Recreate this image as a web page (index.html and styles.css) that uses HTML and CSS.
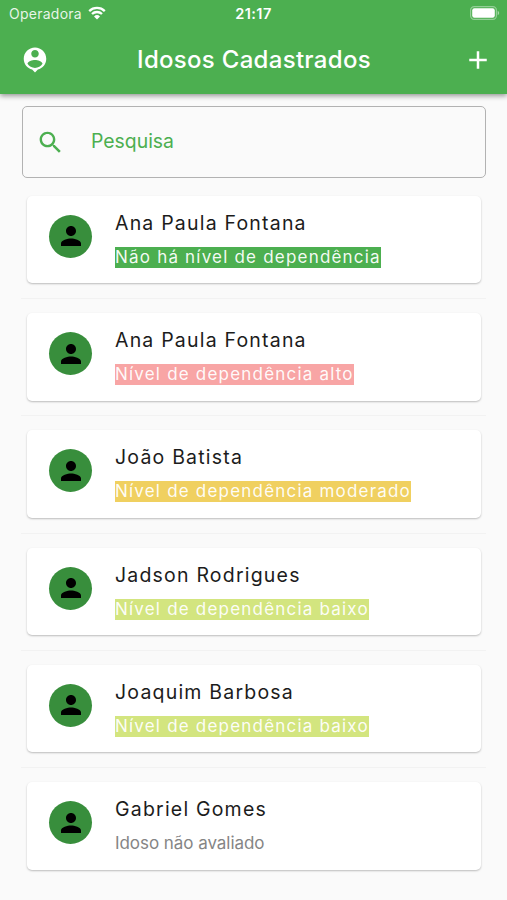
FILE: index.html
```html
<!DOCTYPE html>
<html lang="pt-BR">
<head>
    <meta charset="UTF-8">
    <meta name="viewport" content="width=device-width, initial-scale=1.0">
    <title>Idosos Cadastrados</title>
    <link rel="stylesheet" href="styles.css">
</head>
<body>
    <svg class="sprite" width="0" height="0">
        <symbol id="person" viewBox="0 0 24 24">
            <path d="M12 12c2.21 0 4-1.79 4-4s-1.79-4-4-4-4 1.79-4 4 1.79 4 4 4zm0 2c-2.67 0-8 1.34-8 4v2h16v-2c0-2.66-5.33-4-8-4z"/>
        </symbol>
    </svg>

    <header class="header">
        <div class="status-bar">
            <div class="carrier">
                <span>Operadora</span>
                <svg class="wifi" viewBox="0 0 18 14">
                    <path d="M1.2 5.1a11.2 11.2 0 0 1 15.6 0M4 8a7.2 7.2 0 0 1 10 0" fill="none" stroke="#fff" stroke-width="2.3"/>
                    <path d="M9 13.6l-3-3.1a4.3 4.3 0 0 1 6 0z" fill="#fff"/>
                </svg>
            </div>
            <div class="clock">21:17</div>
            <svg class="battery" viewBox="0 0 30 14">
                <rect x="0.6" y="0.6" width="25.8" height="12.8" rx="3.6" fill="none" stroke="#fff" stroke-opacity=".4" stroke-width="1.2"/>
                <rect x="2.2" y="2.2" width="22.6" height="9.6" rx="2.2" fill="#fff"/>
                <path d="M27.7 4.8c2 .8 2 3.6 0 4.4z" fill="#fff" fill-opacity=".5"/>
            </svg>
        </div>
        <div class="toolbar">
            <svg class="icon-profile" viewBox="0 0 24 24">
                <path d="M12 2c-4.97 0-9 4.03-9 9 0 4.17 2.84 7.67 6.69 8.69L12 22l2.31-2.31C18.16 18.67 21 15.17 21 11c0-4.97-4.03-9-9-9zm0 2c1.66 0 3 1.34 3 3s-1.34 3-3 3-3-1.34-3-3 1.34-3 3-3zm0 14.3c-2.5 0-4.71-1.28-6-3.22.03-1.99 4-3.08 6-3.08 1.99 0 5.97 1.09 6 3.08-1.29 1.94-3.5 3.22-6 3.22z"/>
            </svg>
            <h1>Idosos Cadastrados</h1>
            <svg class="icon-add" viewBox="0 0 24 24">
                <path d="M19 13h-6v6h-2v-6H5v-2h6V5h2v6h6v2z"/>
            </svg>
        </div>
    </header>

    <main class="content">
        <div class="search">
            <svg class="icon-search" viewBox="0 0 24 24">
                <path d="M15.5 14h-.79l-.28-.27C15.41 12.59 16 11.11 16 9.5 16 5.91 13.09 3 9.5 3S3 5.91 3 9.5 5.91 16 9.5 16c1.61 0 3.09-.59 4.23-1.57l.27.28v.79l5 4.99L20.49 19l-4.99-5zm-6 0C7.01 14 5 11.99 5 9.5S7.01 5 9.5 5 14 7.01 14 9.5 11.99 14 9.5 14z"/>
            </svg>
            <span>Pesquisa</span>
        </div>

        <ul class="list">
            <li>
                <div class="card">
                    <div class="avatar"><svg><use href="#person"/></svg></div>
                    <div class="info">
                        <h2>Ana Paula Fontana</h2>
                        <span class="level none">Não há nível de dependência</span>
                    </div>
                </div>
            </li>
            <li>
                <div class="card">
                    <div class="avatar"><svg><use href="#person"/></svg></div>
                    <div class="info">
                        <h2>Ana Paula Fontana</h2>
                        <span class="level high">Nível de dependência alto</span>
                    </div>
                </div>
            </li>
            <li>
                <div class="card">
                    <div class="avatar"><svg><use href="#person"/></svg></div>
                    <div class="info">
                        <h2>João Batista</h2>
                        <span class="level moderate">Nível de dependência moderado</span>
                    </div>
                </div>
            </li>
            <li>
                <div class="card">
                    <div class="avatar"><svg><use href="#person"/></svg></div>
                    <div class="info">
                        <h2>Jadson Rodrigues</h2>
                        <span class="level low">Nível de dependência baixo</span>
                    </div>
                </div>
            </li>
            <li>
                <div class="card">
                    <div class="avatar"><svg><use href="#person"/></svg></div>
                    <div class="info">
                        <h2>Joaquim Barbosa</h2>
                        <span class="level low">Nível de dependência baixo</span>
                    </div>
                </div>
            </li>
            <li>
                <div class="card">
                    <div class="avatar"><svg><use href="#person"/></svg></div>
                    <div class="info">
                        <h2>Gabriel Gomes</h2>
                        <span class="pending">Idoso não avaliado</span>
                    </div>
                </div>
            </li>
        </ul>
    </main>
</body>
</html>
```
FILE: styles.css
```css
* {
    box-sizing: border-box;
}

body {
    margin: 0;
    height: 900px;
    overflow: hidden;
    background-color: #fafafa;
    font-family: Inter, "Liberation Sans", sans-serif;
}

.sprite {
    display: block;
}

/* Header */
.header {
    height: 94px;
    background-color: #4caf50;
    color: #fff;
    box-shadow: 0 2px 5px rgba(0, 0, 0, 0.4);
}

.status-bar {
    display: grid;
    grid-template-columns: 1fr auto 1fr;
    align-items: center;
    height: 27px;
    padding: 0 7px 0 9px;
}

.carrier {
    display: flex;
    align-items: center;
    gap: 6px;
    font-size: 14px;
    letter-spacing: 0.25px;
    color: rgba(255, 255, 255, 0.88);
}

.wifi {
    width: 18px;
    height: 14px;
    margin-top: -2px;
}

.clock {
    margin-right: 2px;
    font-size: 14.5px;
    font-weight: 600;
    letter-spacing: 0.4px;
}

.battery {
    justify-self: end;
    width: 30px;
    height: 14px;
    margin-top: -1px;
}

.toolbar {
    display: flex;
    align-items: center;
    justify-content: space-between;
    height: 65px;
    padding: 0 14px 0 20px;
}

.toolbar h1 {
    margin: 0 5px 0 0;
    font-size: 24px;
    font-weight: 500;
    letter-spacing: 0.3px;
}

.icon-profile,
.icon-add {
    width: 30px;
    height: 30px;
    fill: #fff;
}

/* Search */
.content {
    padding: 12px 21px 0;
}

.search {
    display: flex;
    align-items: center;
    gap: 26px;
    height: 72px;
    margin-left: 1px;
    padding-left: 13px;
    border: 1.5px solid #b2b2b2;
    border-radius: 5px;
    color: #4caf50;
    font-size: 19.4px;
}

.search span {
    margin-top: -2px;
}

.icon-search {
    width: 29px;
    height: 29px;
    fill: #4caf50;
}

/* List */
.list {
    margin: 0;
    padding: 0;
    list-style: none;
}

.list li {
    height: 117.3px;
    padding: 14px 5px 0 6px;
}

.list li + li {
    border-top: 1px solid #f2f2f2;
}

.list li:first-child {
    height: 120px;
    padding-top: 17.5px;
}

.card {
    display: flex;
    gap: 23px;
    height: 87.5px;
    padding: 19px 22px 0;
    background-color: #fff;
    border-radius: 5px;
    box-shadow: 0 1px 2px rgba(0, 0, 0, 0.25);
}

.avatar {
    display: flex;
    align-items: center;
    justify-content: center;
    width: 43px;
    height: 43px;
    border-radius: 50%;
    background-color: #388e3c;
}

.avatar svg {
    width: 30px;
    height: 30px;
}

.info h2 {
    margin: -4px 0 12px;
    font-size: 19.5px;
    font-weight: 400;
    line-height: 24px;
    letter-spacing: 1.2px;
    color: #1c1c1c;
}

.level,
.pending {
    display: block;
    width: fit-content;
    height: 21px;
    font-size: 17px;
    line-height: 21px;
    white-space: nowrap;
}

.level {
    letter-spacing: 1.2px;
    color: rgba(255, 255, 255, 0.95);
}

.none {
    background-color: #4caf50;
}

.high {
    background-color: #f8a5a5;
}

.moderate {
    background-color: #f0d060;
}

.low {
    background-color: #d3e57f;
}

.pending {
    letter-spacing: -0.05px;
    color: #858585;
}
```
